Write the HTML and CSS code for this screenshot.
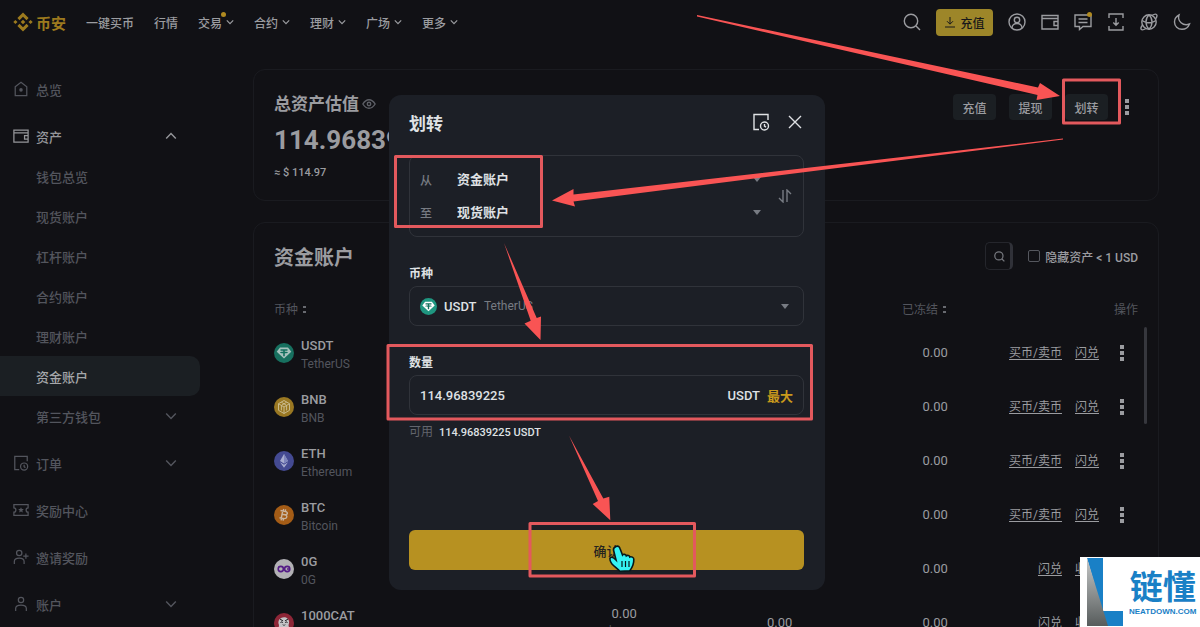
FILE: index.html
```html
<!DOCTYPE html>
<html lang="zh-CN">
<head>
    <meta charset="UTF-8">
    <meta name="viewport" content="width=device-width, initial-scale=1.0">
    <title>资金账户</title>
    <link rel="stylesheet" href="styles.css">
</head>
<body>
    <!-- shared icons -->
    <svg class="sprite" aria-hidden="true">
        <symbol id="chevron" viewBox="0 0 10 10"><path d="M1 3l4 4 4-4"/></symbol>
        <symbol id="search" viewBox="0 0 18 18"><circle cx="8" cy="8" r="6.7"/><path d="M13 13l4 4"/></symbol>
        <symbol id="wallet" viewBox="0 0 18 18"><path d="M1 2.5h16v13.5H1zM1 5.5h16M17 8.500h-4v4h4"/></symbol>
        <symbol id="record" viewBox="0 0 18 18"><path d="M7 16.500H2v-15h14V7"/><circle cx="12.500" cy="13" r="4"/><path d="M12.500 11v2.200l1.500 1"/></symbol>
        <symbol id="dots" viewBox="0 0 4 18"><path d="M0 1h4v4H0zM0 7h4v4H0zM0 13h4v4H0z"/></symbol>
        <symbol id="tether" viewBox="0 0 20 20"><path fill="currentColor" d="M6 4.500h8l3.300 4.200L10 15.600 2.700 8.700z"/><path fill="#14705f" d="M6.500 6.200h7v1.500h-2.700v1c2 .1 3.200.4 3.200.8s-1.200.7-3.200.8v3H9.200v-3C7.200 10.200 6 9.900 6 9.500s1.200-.7 3.200-.8v-1H6.500z"/></symbol>
    </svg>

    <header class="topbar">
        <a class="logo" href="#">
            <svg viewBox="0 0 20 20" width="20" height="20"><path d="M10 .5l5.600 5.600-2.100 2.100L10 4.700 6.500 8.200 4.400 6.100zM10 19.500l5.600-5.600-2.100-2.100-3.500 3.500-3.500-3.500-2.100 2.100zM10 7.700l2.300 2.300-2.300 2.300L7.700 10zM2.400 7.900L4.500 10l-2.100 2.100L.3 10zM17.600 7.900l2.100 2.100-2.100 2.100-2.100-2.100z"/></svg>
            <span>币安</span>
        </a>
        <nav class="nav">
            <a href="#">一键买币</a>
            <a href="#">行情</a>
            <a href="#" class="has-dot">交易<svg class="chevron"><use href="#chevron"/></svg></a>
            <a href="#">合约<svg class="chevron"><use href="#chevron"/></svg></a>
            <a href="#">理财<svg class="chevron"><use href="#chevron"/></svg></a>
            <a href="#">广场<svg class="chevron"><use href="#chevron"/></svg></a>
            <a href="#">更多<svg class="chevron"><use href="#chevron"/></svg></a>
        </nav>
        <div class="tools">
            <button class="icon-btn" aria-label="搜索"><svg class="icon"><use href="#search"/></svg></button>
            <button class="deposit"><svg viewBox="0 0 12 12"><path d="M6 1v7M3 5.200l3 3 3-3M1 11h10"/></svg>充值</button>
            <button class="icon-btn" aria-label="个人"><svg class="icon" viewBox="0 0 18 18"><circle cx="9" cy="9" r="8"/><circle cx="9" cy="7" r="2.700"/><path d="M4 15c0-6 10-6 10 0"/></svg></button>
            <button class="icon-btn" aria-label="钱包"><svg class="icon"><use href="#wallet"/></svg></button>
            <button class="icon-btn has-dot" aria-label="消息"><svg class="icon" viewBox="0 0 18 18"><path d="M1 2h16v11.500h-8L5.500 16.500v-3H1zM4.500 6h9M4.500 9.500h9"/></svg></button>
            <button class="icon-btn" aria-label="下载"><svg class="icon" viewBox="0 0 18 18"><path d="M2 5V1h14v4M2 13v4h14v-4M9 5v7M6.300 9.500L9 12.200l2.700-2.700"/></svg></button>
            <button class="icon-btn" aria-label="语言"><svg class="icon" viewBox="0 0 18 18"><circle cx="9" cy="9" r="7.200"/><path d="M2 7.500c4 3 10 3 14 0M9 1.800c-4 4-4 10.400 0 14.400M9 1.800c4 4 4 10.400 0 14.400M2.500 12c-3 4-1.500 6.500 3.500 3.500M12 2.500c4.500-3 6.500-.5 3.500 3.500"/></svg></button>
            <button class="icon-btn" aria-label="深色模式"><svg class="icon" viewBox="0 0 18 18"><path d="M6 2C3 3.500 1.500 6 1.500 9c0 4 3.300 7.300 7.500 7.300 3.500 0 6.300-2.100 7.500-5.300C10 13.500 4 8 6 2z"/></svg></button>
        </div>
    </header>

    <div class="page">
        <aside class="sidebar">
            <a href="#" class="item"><svg class="icon" viewBox="0 0 18 18"><path d="M2.500 6.500L9 1.500l6.500 5v10h-13z"/><circle class="solid" cx="9" cy="10" r="2"/></svg>总览</a>
            <div class="group">
                <a href="#" class="item bright"><svg class="icon"><use href="#wallet"/></svg>资产<svg class="chevron up"><use href="#chevron"/></svg></a>
                <a href="#" class="item sub">钱包总览</a>
                <a href="#" class="item sub">现货账户</a>
                <a href="#" class="item sub">杠杆账户</a>
                <a href="#" class="item sub">合约账户</a>
                <a href="#" class="item sub">理财账户</a>
                <a href="#" class="item sub active">资金账户</a>
                <a href="#" class="item sub">第三方钱包<svg class="chevron"><use href="#chevron"/></svg></a>
            </div>
            <a href="#" class="item"><svg class="icon"><use href="#record"/></svg>订单<svg class="chevron"><use href="#chevron"/></svg></a>
            <a href="#" class="item"><svg class="icon" viewBox="0 0 18 18"><path d="M1 3h16v3.500c-3 0-3 5 0 5V15H1v-3.500c3 0 3-5 0-5z"/><path class="solid" d="M9 5.800l1 2 2.200.2-1.700 1.500.6 2.200L9 10.600l-2.100 1.100.6-2.200L5.800 8l2.200-.2z"/></svg>奖励中心</a>
            <a href="#" class="item"><svg class="icon" viewBox="0 0 18 18"><circle cx="7" cy="4.500" r="3"/><path d="M1.500 17v-3c0-5 11-5 11 0v3M14.500 5v6M11.500 8h6"/></svg>邀请奖励</a>
            <a href="#" class="item"><svg class="icon" viewBox="0 0 18 18"><circle cx="9" cy="4.500" r="3"/><path d="M3 17v-3c0-5 12-5 12 0v3"/></svg>账户<svg class="chevron"><use href="#chevron"/></svg></a>
        </aside>

        <main class="content">
            <section class="card balance">
                <div>
                    <h1>总资产估值 <svg class="eye" viewBox="0 0 16 12"><path d="M1 6c4-6.500 10-6.500 14 0-4 6.500-10 6.500-14 0z"/><circle cx="8" cy="6" r="2"/></svg></h1>
                    <div class="amount">114.96839225</div>
                    <div class="fiat">≈ $ 114.97</div>
                </div>
                <div class="actions">
                    <button>充值</button>
                    <button>提现</button>
                    <button>划转</button>
                    <svg class="dots"><use href="#dots"/></svg>
                </div>
            </section>

            <section class="card funding">
                <div class="funding-head">
                    <h2>资金账户</h2>
                    <label class="search-box"><svg><use href="#search"/></svg><input type="text" aria-label="搜索币种"></label>
                    <label class="hide-small"><input type="checkbox"><span>隐藏资产 &lt; 1 USD</span></label>
                </div>
                <table class="coins">
                    <colgroup><col class="c-name"><col class="c-num"><col class="c-num"><col class="c-num"><col class="c-act"></colgroup>
                    <thead>
                        <tr>
                            <th>币种<i class="sort"></i></th>
                            <th>总额<i class="sort"></i></th>
                            <th>可用<i class="sort"></i></th>
                            <th>已冻结<i class="sort"></i></th>
                            <th>操作</th>
                        </tr>
                    </thead>
                    <tbody>
                        <tr>
                            <td><div class="coin"><svg class="usdt" viewBox="0 0 20 20"><use href="#tether"/></svg><div>USDT<small>TetherUS</small></div></div></td>
                            <td>114.97<small>$114.97</small></td><td>114.97</td><td>0.00</td>
                            <td><div class="links"><a href="#">买币/卖币</a><a href="#">闪兑</a><svg class="dots"><use href="#dots"/></svg></div></td>
                        </tr>
                        <tr>
                            <td><div class="coin"><svg class="bnb" viewBox="0 0 20 20"><path d="M10 3.500l5.500 3.200v6.600L10 16.500l-5.500-3.200V6.700zM4.500 6.700L10 10l5.500-3.300M10 10v6.500M7.300 5.200l5.300 3.200v5M12.700 5.200L7.400 8.400v5"/></svg><div>BNB<small>BNB</small></div></div></td>
                            <td>0.00<small>$0.00</small></td><td>0.00</td><td>0.00</td>
                            <td><div class="links"><a href="#">买币/卖币</a><a href="#">闪兑</a><svg class="dots"><use href="#dots"/></svg></div></td>
                        </tr>
                        <tr>
                            <td><div class="coin"><svg class="eth" viewBox="0 0 20 20"><path fill="#a7acd0" d="M10 3l4 7-4 2.400L6 10z"/><path fill="#7f86bd" d="M10 3l4 7-4 2.400z"/><path fill="#a7acd0" d="M6 11.300l4 2.400 4-2.400-4 5.500z"/></svg><div>ETH<small>Ethereum</small></div></div></td>
                            <td>0.00<small>$0.00</small></td><td>0.00</td><td>0.00</td>
                            <td><div class="links"><a href="#">买币/卖币</a><a href="#">闪兑</a><svg class="dots"><use href="#dots"/></svg></div></td>
                        </tr>
                        <tr>
                            <td><div class="coin"><svg class="btc" viewBox="0 0 20 20"><path d="M6.500 5.500l5 1c3 .7 2 3.600-.5 3.200 3 .7 2.200 4.500-1.500 3.800l-4-.8M8.700 6L7.300 13M8 9.200l3 .5M9.200 6l.5-2M11.200 6.400l.5-2M7.500 13.300l-.4 2M9.500 13.700l-.4 2"/></svg><div>BTC<small>Bitcoin</small></div></div></td>
                            <td>0.00<small>$0.00</small></td><td>0.00</td><td>0.00</td>
                            <td><div class="links"><a href="#">买币/卖币</a><a href="#">闪兑</a><svg class="dots"><use href="#dots"/></svg></div></td>
                        </tr>
                        <tr>
                            <td><div class="coin"><svg class="zerog" viewBox="0 0 20 20"><circle cx="6.800" cy="10" r="2.600"/><circle cx="13.200" cy="10" r="2.600"/><path d="M13 10h2.500"/></svg><div>0G<small>0G</small></div></div></td>
                            <td>0.00<small>$0.00</small></td><td>0.00</td><td>0.00</td>
                            <td><div class="links"><a href="#">闪兑</a><a href="#">收益</a><svg class="dots"><use href="#dots"/></svg></div></td>
                        </tr>
                        <tr>
                            <td><div class="coin"><svg class="cat" viewBox="0 0 20 20"><path fill="#c4c4c6" stroke="none" d="M4 20l1-8c-1.500-3 0-6 2-7 2-1 5-1 6.500.5 2 2 2 4 1 6.500L16 20z"/><path d="M6 6l3 2M14 6l-3 2M6.500 9.500c1-1 2-.5 2 .5M11.500 10c0-1 1-1.500 2-.5M9 11.500l1 1 1-1"/></svg><div>1000CAT<small>Simon's Cat</small></div></div></td>
                            <td>0.00<small>$0.00</small></td><td>0.00</td><td>0.00</td>
                            <td><div class="links"><a href="#">闪兑</a><a href="#">收益</a><svg class="dots"><use href="#dots"/></svg></div></td>
                        </tr>
                    </tbody>
                </table>
                <span class="scroll-thumb"></span>
            </section>
        </main>
    </div>

    <form class="modal" role="dialog" aria-label="划转">
        <div class="modal-head">
            <h3>划转</h3>
            <button type="button" class="icon-btn" aria-label="划转记录"><svg class="icon"><use href="#record"/></svg></button>
            <button type="button" class="icon-btn" aria-label="关闭"><svg class="icon" viewBox="0 0 18 18"><path d="M3 3l12 12M15 3L3 15"/></svg></button>
        </div>

        <div class="route">
            <div class="route-rows">
                <div class="route-row">
                    <label for="from">从</label>
                    <select id="from"><option>资金账户</option><option>现货账户</option></select>
                    <i class="caret"></i>
                </div>
                <div class="route-row">
                    <label for="to">至</label>
                    <select id="to"><option>现货账户</option><option>资金账户</option></select>
                    <i class="caret"></i>
                </div>
            </div>
            <button type="button" class="swap" aria-label="互换"><svg viewBox="0 0 14 14"><path d="M1 9l4 4V1M9 13V1l4 4"/></svg></button>
        </div>

        <label class="label" for="coin">币种</label>
        <div class="field">
            <svg class="coin-icon" viewBox="0 0 20 20"><use href="#tether"/></svg>
            <select id="coin"><option>USDT</option></select>
            <span class="coin-name">TetherUS</span>
            <i class="caret"></i>
        </div>

        <label class="label" for="qty">数量</label>
        <div class="field">
            <input type="text" id="qty" value="114.96839225">
            <span class="unit">USDT</span>
            <button type="button" class="max">最大</button>
        </div>
        <p class="available">可用 <span>114.96839225 USDT</span></p>

        <button type="button" class="confirm">确认</button>
    </form>

    <!-- step marks drawn over the page -->
    <svg class="marks" width="1200" height="627" viewBox="0 0 1200 627" aria-hidden="true">
        <g class="frames">
            <rect x="395.500" y="156.500" width="146" height="70"/>
            <rect x="1063.500" y="80" width="56" height="43"/>
            <rect x="388" y="345.500" width="423.500" height="73.500"/>
            <rect x="530" y="523.500" width="164.500" height="52.500"/>
        </g>
        <g class="arrows">
            <path d="M697 15l341 72.500 2-4.500 20 13-23.500 4 1-5L697 16.500z"/>
            <path d="M1063 138.500L573.500 194.500V189L552 200.500l23 6-1.500-5L1063 139.500z"/>
            <path d="M504 243l32.700 75 4.300-1.500-.5 23.500-16-16.500 6.200-2.800z"/>
            <path d="M569 435.500l34.300 63 6-1.800 1 23.600L592.700 504l5.300-3z"/>
        </g>
        <path class="hand" d="M616 546.500c2.500-1.200 3.700.8 4.200 2.500l2.300 6c.8-1.200 3.500-.7 3.800.8 1-.8 3.300-.3 3.500 1.200 1.500-.7 4 .3 4 2.300.2 5-1.300 8-4 11.500l-10 .5c-2-2.800-5.300-4.500-7.800-7.300-1.500-2-3-5.500-1.500-6.500 2.200-1 4 1 5.500 2.500l-2.500-10c-.2-1.300.8-2.800 2.500-3.500z"/>
        <path class="hand-lines" d="M622 561v6M625.500 561v6M629 561v6"/>
    </svg>

    <div class="watermark">
        <svg viewBox="0 0 38 68" width="38" height="68">
            <defs><linearGradient id="fade" x2="0" y2="1"><stop stop-color="#c6c8c8"/><stop offset="1" stop-color="#575c5c"/></linearGradient></defs>
            <path fill="#1980c6" d="M1 0h16v53h20v15H20z"/>
            <path fill="url(#fade)" d="M1 0l21 68H1z"/>
        </svg>
        <div><strong>链懂</strong><span>NEATDOWN.COM</span></div>
    </div>
</body>
</html>
```
FILE: styles.css
```css
* {
    box-sizing: border-box;
}
body {
    margin: 0;
    height: 100vh;
    overflow: hidden;
    position: relative;
    background-color: #111115;
    color: #9b9ca0;
    font-family: Roboto, "Noto Sans CJK SC", sans-serif;
    font-size: 13px;
    font-weight: 500;
}
a {
    color: inherit;
    text-decoration: none;
}
button, input, select {
    font: inherit;
    color: inherit;
    margin: 0;
    padding: 0;
    border: none;
    background: none;
}
button {
    cursor: pointer;
}
select {
    appearance: none;
}
h1, h2, h3, p {
    margin: 0;
}
svg {
    display: block;
    flex: none;
    fill: none;
    stroke: currentColor;
}
.sprite {
    position: absolute;
    width: 0;
    height: 0;
}
.icon {
    width: 18px;
    height: 18px;
    stroke-width: 1.4;
}
.icon-btn {
    display: flex;
}
.chevron {
    width: 8px;
    height: 8px;
    stroke-width: 1.5;
}
.chevron.up {
    transform: rotate(180deg);
}
.solid {
    fill: currentColor;
    stroke: none;
}
.dots {
    width: 4px;
    height: 18px;
    fill: currentColor;
    stroke: none;
}

/* top bar */
.topbar {
    display: flex;
    align-items: center;
    height: 44px;
    padding: 0 9px 0 13px;
}
.logo {
    display: flex;
    align-items: center;
    gap: 3px;
    margin-right: 20px;
    color: #9c7a1e;
    font-size: 15px;
    font-weight: 700;
}
.logo svg {
    fill: currentColor;
    stroke: none;
}
.nav {
    display: flex;
    gap: 20px;
    font-size: 12px;
}
.nav a {
    display: flex;
    align-items: center;
    gap: 4px;
}
.has-dot {
    position: relative;
}
.has-dot::after {
    content: "";
    position: absolute;
    top: -1px;
    right: 0;
    width: 5px;
    height: 5px;
    border-radius: 50%;
    background-color: #b08a20;
}
.nav .has-dot::after {
    top: -2px;
    right: 8px;
}
.tools {
    display: flex;
    align-items: center;
    gap: 15px;
    margin-left: auto;
}
.deposit {
    display: flex;
    align-items: center;
    justify-content: center;
    gap: 4px;
    width: 57px;
    height: 27px;
    border-radius: 4px;
    background-color: #9d8629;
    color: #18181a;
    font-size: 12px;
}
.deposit svg {
    width: 12px;
    height: 12px;
}

/* layout */
.page {
    display: flex;
    gap: 53px;
    padding: 25px 41px 0 0;
}
.sidebar {
    display: flex;
    flex-direction: column;
    flex: none;
    gap: 7px;
    width: 200px;
    color: #53555d;
}
.item {
    display: flex;
    align-items: center;
    gap: 7px;
    height: 40px;
    padding: 0 23px 0 13px;
}
.item .icon {
    width: 16px;
    height: 16px;
}
.item .chevron {
    width: 12px;
    height: 12px;
    margin-left: auto;
    stroke-width: 1.2;
}
.item.sub {
    padding-left: 36px;
}
.item.bright {
    color: #95969a;
}
.item.active {
    border-radius: 0 10px 10px 0;
    background-color: #1b1f23;
    color: #a5a7aa;
}
.content {
    display: flex;
    flex-direction: column;
    flex: 1;
    gap: 21px;
    min-width: 0;
}
.card {
    position: relative;
    padding: 20px;
    border: 1px solid #1a1b20;
    border-radius: 12px;
}

/* balance */
.balance {
    display: flex;
    justify-content: space-between;
    align-items: flex-start;
    height: 132px;
    white-space: nowrap;
}
.balance h1 {
    display: flex;
    align-items: center;
    gap: 3px;
    font-size: 17px;
    font-weight: 600;
    line-height: 28px;
}
.eye {
    width: 14px;
    height: 12px;
    color: #5d5f66;
    stroke-width: 1.6;
}
.amount {
    font-size: 26px;
    font-weight: 700;
    line-height: 44px;
}
.fiat {
    font-size: 11px;
    line-height: 22px;
}
.actions {
    display: flex;
    align-items: center;
    gap: 13px;
    padding: 4px 9px 0 0;
}
.actions button {
    width: 43px;
    height: 26px;
    border-radius: 4px;
    background-color: #1b1f23;
    font-size: 12px;
}
.actions .dots {
    margin-left: 4px;
}

/* funding account */
.funding {
    padding-top: 18px;
}
.funding-head {
    display: flex;
    align-items: center;
    height: 30px;
}
.funding-head h2 {
    margin-right: auto;
    font-size: 20px;
    font-weight: 600;
}
.search-box {
    display: flex;
    align-items: center;
    width: 28px;
    height: 28px;
    padding-left: 8px;
    border: 1px solid #25262c;
    border-right: 3px solid #303138;
    border-radius: 5px;
}
.search-box svg {
    width: 11px;
    height: 11px;
    stroke-width: 2;
    color: #77797f;
}
.search-box input {
    flex: 1;
    width: 0;
    min-width: 0;
}
.hide-small {
    display: flex;
    align-items: center;
    gap: 5px;
    margin-left: 15px;
    font-size: 12px;
}
.hide-small input {
    appearance: none;
    width: 12px;
    height: 12px;
    border: 1px solid #55575e;
    border-radius: 2px;
}
.coins {
    width: 100%;
    margin-top: 19px;
    border-collapse: collapse;
    table-layout: fixed;
}
.c-name {
    width: 24%;
}
.c-num {
    width: 18%;
}
.c-act {
    width: 22%;
}
.coins th {
    height: 36px;
    padding: 0;
    color: #53555d;
    font-size: 12px;
    font-weight: 400;
    text-align: right;
}
.coins th:first-child {
    text-align: left;
}
.sort {
    display: inline-block;
    width: 3px;
    height: 7px;
    margin: 0 2px 1px 5px;
    border: solid #686a70;
    border-width: 2px 0;
}
.coins td {
    height: 54px;
    padding: 0;
    text-align: right;
    font-weight: 400;
    line-height: 18px;
}
.coins small {
    display: block;
    color: #53555d;
    font-size: 12px;
    font-weight: 400;
    line-height: 18px;
}
.coin {
    display: flex;
    align-items: center;
    gap: 7px;
    text-align: left;
    font-weight: 500;
    white-space: nowrap;
}
.coin div {
    padding-top: 3px;
}
.coin svg {
    width: 20px;
    height: 20px;
    border-radius: 50%;
}
.usdt {
    background-color: #17705f;
    color: #a6c2bd;
    stroke: none;
}
.bnb {
    background-color: #9a7822;
    color: #c9ba8c;
}
.eth {
    background-color: #444a92;
    stroke: none;
}
.btc {
    background-color: #a45c16;
    color: #c9b5a0;
    stroke-width: 1.4;
}
.zerog {
    background-color: #b2b1b5;
    color: #541b86;
    stroke-width: 1.6;
}
.cat {
    background-color: #8e2637;
    color: #17171a;
}
.links {
    display: flex;
    justify-content: flex-end;
    align-items: center;
    gap: 13px;
    padding-right: 14px;
    font-size: 12px;
}
.links a {
    text-decoration: underline;
    text-underline-offset: 2px;
}
.links .dots {
    margin-left: 8px;
}
.scroll-thumb {
    position: absolute;
    top: 104px;
    right: 11px;
    width: 3px;
    height: 97px;
    border-radius: 2px;
    background-color: #36373d;
}

/* transfer dialog */
.modal {
    position: absolute;
    top: 95px;
    left: 389px;
    width: 436px;
    padding: 12px 21px 20px 20px;
    border-radius: 12px;
    background-color: #1c1f26;
    color: #dfe1e4;
}
.modal-head {
    display: flex;
    align-items: center;
    gap: 16px;
    height: 30px;
    margin-bottom: 18px;
}
.modal-head h3 {
    margin-right: auto;
    font-size: 17px;
    font-weight: 700;
}
.route {
    display: flex;
    align-items: center;
    height: 82px;
    padding: 0 11px 0 10px;
    border: 1px solid #30333a;
    border-radius: 8px;
}
.route-rows {
    flex: 1;
}
.route-row {
    display: flex;
    align-items: center;
    height: 33px;
}
.route-row label {
    width: 37px;
    color: #777b83;
    font-size: 12px;
}
.route-row select {
    flex: 1;
    font-weight: 600;
}
.caret {
    border: 4px solid transparent;
    border-top: 5px solid #777b83;
    border-bottom: none;
}
.swap {
    margin-left: 17px;
    color: #777b83;
}
.swap svg {
    width: 14px;
    height: 14px;
    stroke-width: 1.4;
}
.label {
    display: block;
    margin-top: 28px;
    font-size: 12px;
    font-weight: 600;
    line-height: 18px;
}
.field {
    display: flex;
    align-items: center;
    gap: 7px;
    height: 40px;
    margin-top: 3px;
    padding: 0 10px;
    border: 1px solid #30333a;
    border-radius: 8px;
}
.coin-icon {
    width: 17px;
    height: 17px;
    border-radius: 50%;
    background-color: #1f9680;
    color: #fff;
    stroke: none;
}
.coin-name {
    color: #777b83;
    font-size: 12px;
    font-weight: 400;
}
.field .caret {
    margin: 0 4px 0 auto;
}
.field input {
    flex: 1;
    min-width: 0;
}
.max {
    color: #c99a1c;
    font-weight: 600;
}
.available {
    margin-top: 7px;
    color: #62656d;
    font-size: 12px;
    font-weight: 400;
    line-height: 20px;
}
.available span {
    margin-left: 3px;
    color: #dfe1e4;
    font-size: 11px;
    font-weight: 500;
}
.confirm {
    width: 100%;
    height: 40px;
    margin-top: 87px;
    border-radius: 6px;
    background-color: #b79121;
    color: #25241f;
}

/* marks */
.marks {
    position: absolute;
    top: 0;
    left: 0;
    pointer-events: none;
}
.frames {
    stroke: #e3595d;
    stroke-width: 3;
    stroke-linejoin: round;
}
.arrows {
    fill: #f95454;
    stroke: none;
}
.hand {
    fill: #35f3f3;
    stroke: #06181b;
    stroke-width: 1.6;
}
.hand-lines {
    stroke: #06181b;
    stroke-width: 1.2;
}

.watermark {
    position: absolute;
    right: 0;
    bottom: 0;
    display: flex;
    gap: 5px;
    width: 120px;
    height: 70px;
    padding: 1px 0 0 6px;
    background-color: #fff;
    color: #1980c6;
    text-align: center;
}
.watermark svg {
    stroke: none;
}
.watermark strong {
    display: block;
    margin-top: 11px;
    font-size: 33px;
    line-height: 38px;
}
.watermark span {
    display: block;
    font: bold 8px/10px "Liberation Sans", sans-serif;
}
```
